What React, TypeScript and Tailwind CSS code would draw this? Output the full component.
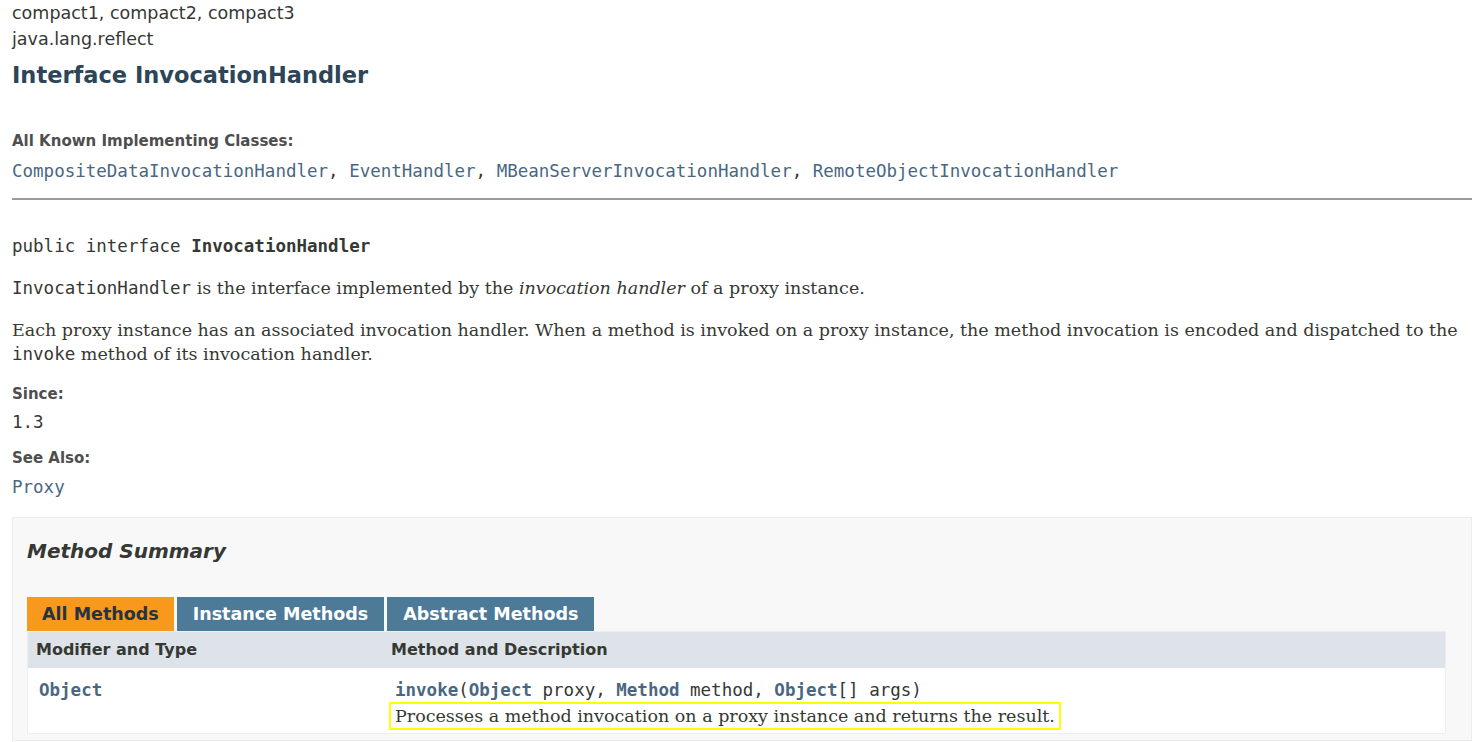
import React from "react";

const sans = "font-['DejaVu_Sans',sans-serif]";
const mono = "font-['DejaVu_Sans_Mono',monospace]";
const serif = "font-['DejaVu_Serif',serif]";

const implementing = [
  "CompositeDataInvocationHandler",
  "EventHandler",
  "MBeanServerInvocationHandler",
  "RemoteObjectInvocationHandler",
];

const tabs = [
  { label: "All Methods", active: true },
  { label: "Instance Methods", active: false },
  { label: "Abstract Methods", active: false },
];

export default function App() {
  return (
    <div className={`${sans} min-h-screen bg-white text-[#353833] text-[17.5px] px-3`}>
      <div className="leading-[26px]">compact1, compact2, compact3</div>
      <div className="leading-[26px]">java.lang.reflect</div>
      <h2 className="mt-[8px] text-[22.5px] font-bold text-[#2c4557] leading-[30px]">
        Interface InvocationHandler
      </h2>

      <dl className="mt-[41px]">
        <dt className="text-[15px] font-bold text-[#4e4e4e] leading-[20px]">
          All Known Implementing Classes:
        </dt>
        <dd className={`${mono} mt-[8px] leading-[24px] text-[#4a6782]`}>
          {implementing.map((name, i) => (
            <span key={name}>
              {name}
              {i < implementing.length - 1 && <span className="text-[#353833]">, </span>}
            </span>
          ))}
        </dd>
      </dl>

      <hr className="mt-[15px] border-t-2 border-[#9a9a9a] border-b-0 mr-[-7px]" />

      <pre className={`${mono} mt-[34px] leading-[24px]`}>
        public interface <b>InvocationHandler</b>
      </pre>

      <div className={`${serif} mt-[18px] leading-[24px]`}>
        <code className={mono}>InvocationHandler</code> is the interface implemented by the{" "}
        <i>invocation handler</i> of a proxy instance.
      </div>
      <div className={`${serif} mt-[18px] leading-[24px]`}>
        Each proxy instance has an associated invocation handler. When a method is invoked on a proxy
        instance, the method invocation is encoded and dispatched to the{" "}
        <code className={mono}>invoke</code> method of its invocation handler.
      </div>

      <dl className="mt-[17px]">
        <dt className="text-[15px] font-bold text-[#4e4e4e] leading-[22px]">Since:</dt>
        <dd className={`${mono} mt-[5px] leading-[24px]`}>1.3</dd>
        <dt className="mt-[13px] text-[15px] font-bold text-[#4e4e4e] leading-[22px]">See Also:</dt>
        <dd className={`${mono} mt-[6px] leading-[24px] text-[#4a6782]`}>Proxy</dd>
      </dl>

      <div className="mt-[18px] mr-[-7px] border border-[#ededed] bg-[#f8f8f8] pl-[14px] pr-[25px] pb-[6px]">
        <h3 className="mt-[19px] text-[20px] font-bold italic leading-[28px]">Method Summary</h3>

        <div className="mt-[32px] flex gap-[3px] text-[17.5px] font-bold leading-[34px]">
          {tabs.map((t) => (
            <div
              key={t.label}
              className={
                t.active
                  ? "bg-[#f8981d] px-[15px] text-[#253441]"
                  : "bg-[#4d7a97] px-[16px] text-white"
              }
            >
              {t.label}
            </div>
          ))}
        </div>

        <div className="border border-[#eeeeee] bg-white">
          <div className="flex bg-[#dee3e9] text-[16px] font-bold leading-[36px]">
            <div className="w-[355px] pl-[8px]">Modifier and Type</div>
            <div className="pl-[8px]">Method and Description</div>
          </div>
          <div className="flex pt-[10px] pb-[3px]">
            <div className={`${mono} w-[355px] pl-[11px] font-bold text-[#4a6782] leading-[24px]`}>
              Object
            </div>
            <div className="pl-[6px]">
              <div className={`${mono} pl-[6px] leading-[24px]`}>
                <span className="font-bold text-[#4a6782]">invoke</span>(
                <span className="font-bold text-[#4a6782]">Object</span> proxy,{" "}
                <span className="font-bold text-[#4a6782]">Method</span> method,{" "}
                <span className="font-bold text-[#4a6782]">Object</span>[] args)
              </div>
              <div className={`${serif} inline-block border-2 border-[#ffff00] px-[4px] leading-[24px]`}>
                Processes a method invocation on a proxy instance and returns the result.
              </div>
            </div>
          </div>
        </div>
      </div>
    </div>
  );
}
